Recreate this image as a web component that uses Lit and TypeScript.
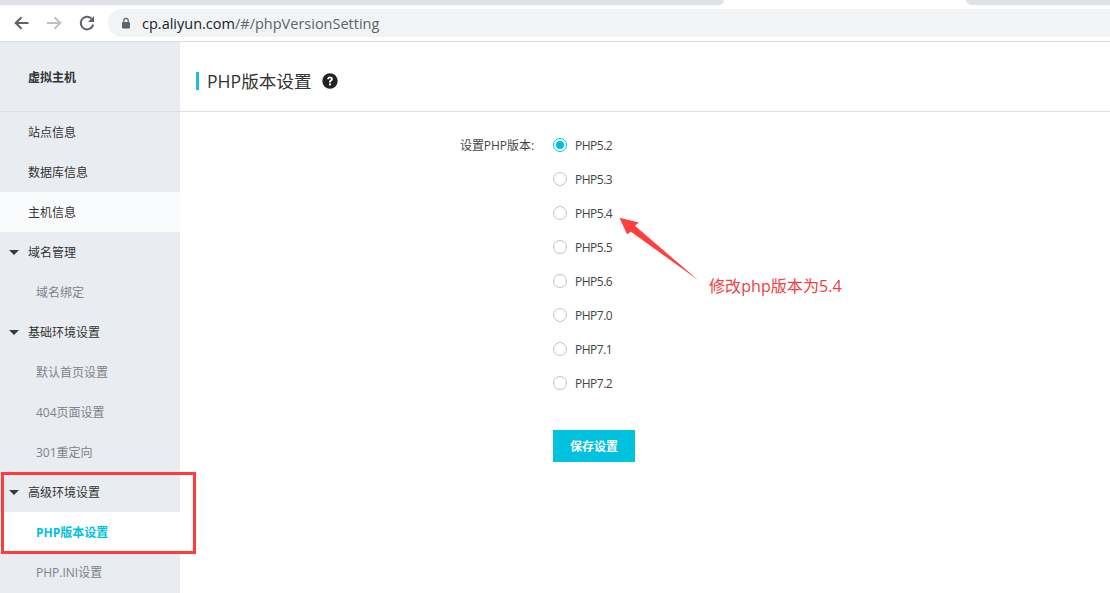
import { LitElement, html, css, svg } from "lit";
import { customElement } from "lit/decorators.js";

type Item = { label: string; kind: "top" | "sub" | "group"; state?: "hover" | "active" };

const ITEMS: Item[] = [
  { label: "站点信息", kind: "top" },
  { label: "数据库信息", kind: "top" },
  { label: "主机信息", kind: "top", state: "hover" },
  { label: "域名管理", kind: "group" },
  { label: "域名绑定", kind: "sub" },
  { label: "基础环境设置", kind: "group" },
  { label: "默认首页设置", kind: "sub" },
  { label: "404页面设置", kind: "sub" },
  { label: "301重定向", kind: "sub" },
  { label: "高级环境设置", kind: "group" },
  { label: "PHP版本设置", kind: "sub", state: "active" },
  { label: "PHP.INI设置", kind: "sub" },
];

const VERSIONS = ["PHP5.2", "PHP5.3", "PHP5.4", "PHP5.5", "PHP5.6", "PHP7.0", "PHP7.1", "PHP7.2"];

@customElement("app-root")
export class AppRoot extends LitElement {
  static styles = css`
    :host {
      display: block;
      position: relative;
      width: 1110px;
      height: 593px;
      overflow: hidden;
      background: #fff;
      font-family: "Open Sans", "Noto Sans CJK SC", sans-serif;
      font-size: 12px;
      color: #333;
    }
    .tabs { display: flex; height: 5px; background: #fff; }
    .tab-l { width: 724px; background: #dee1e6; border-bottom-right-radius: 5px; }
    .tab-gap { width: 242px; }
    .tab-r { flex: 1; background: #dee1e6; border-bottom-left-radius: 5px; }
    .toolbar {
      display: flex;
      align-items: center;
      height: 37px;
      box-sizing: border-box;
      padding: 4px 0;
      border-bottom: 1px solid #dadce0;
      background: #fff;
    }
    .nav { display: flex; width: 108px; flex: none; padding-left: 12px; gap: 15px; box-sizing: border-box; }
    .nav svg { display: block; width: 18px; height: 18px; flex: none; }
    .omni {
      flex: 1;
      height: 28px;
      display: flex;
      align-items: center;
      padding-left: 12px;
      gap: 10px;
      background: #f1f3f4;
      border-radius: 14px 0 0 14px;
      font-size: 14.5px;
      color: #5f6368;
    }
    .omni svg { width: 12px; height: 12px; flex: none; }
    .omni b { font-weight: 400; color: #202124; }
    .layout { display: flex; height: 551px; }
    .side { width: 180px; flex: none; background: #e9ecf1; }
    .side-head {
      height: 70px;
      box-sizing: border-box;
      padding: 0 0 0 28px;
      display: flex;
      align-items: center;
      font-size: 12px;
      font-weight: 700;
      color: #333;
      border-bottom: 1px solid #dcdfe3;
    }
    .row { height: 40px; display: flex; align-items: center; padding-left: 28px; position: relative; color: #333; }
    .row.sub { padding-left: 36px; color: #7f8389; }
    .row.hover { background: #fafbfd; }
    .row.active { background: #fff; color: #00c1de; font-weight: 700; }
    .caret {
      position: absolute;
      left: 9px;
      top: 18px;
      width: 0;
      height: 0;
      border-left: 5px solid transparent;
      border-right: 5px solid transparent;
      border-top: 5px solid #373d41;
    }
    .main { flex: 1; min-width: 0; }
    .head {
      height: 70px;
      box-sizing: border-box;
      border-bottom: 1px solid #dcdfe3;
      display: flex;
      align-items: center;
      padding-left: 16px;
      padding-top: 8px;
      font-size: 17.6px;
      color: #333;
    }
    .bar { width: 3px; height: 18px; background: #1fb9ee; margin-right: 8px; }
    .q { width: 16px; height: 16px; margin-left: 10px; display: block; }
    .form { display: flex; padding-top: 16px; }
    .lab { width: 354px; height: 34px; display: flex; align-items: center; justify-content: flex-end; flex: none; color: #444; letter-spacing: -0.05px; }
    .opts { margin-left: 19px; }
    .opt { height: 34px; display: flex; align-items: center; gap: 8px; color: #444; letter-spacing: -0.5px; }
    .radio {
      width: 14px;
      height: 14px;
      box-sizing: border-box;
      border: 1px solid #c3c3c3;
      border-radius: 50%;
      background: #fff;
    }
    .radio.on { border-color: #00c1de; display: flex; align-items: center; justify-content: center; }
    .radio.on::after { content: ""; width: 8px; height: 8px; border-radius: 50%; background: #00c1de; }
    .save {
      margin-top: 30px;
      width: 82px;
      height: 32px;
      display: flex;
      align-items: center;
      justify-content: center;
      background: #00c1de;
      color: #fff;
      font-weight: 700;
    }
    .mark { position: absolute; left: 1px; top: 472px; width: 195px; height: 82px; box-sizing: border-box; border: 3px solid #ff3b3b; }
    .arrow { position: absolute; left: 615px; top: 210px; width: 90px; height: 75px; }
    .note { position: absolute; left: 709px; top: 275px; font-size: 16.1px; line-height: 22px; color: #f04040; }
  `;

  private back = svg`<path d="M16.5 9H4M9.5 3.2 3.7 9l5.8 5.8" fill="none" stroke="#5f6368" stroke-width="2"/>`;
  private fwd = svg`<path d="M2 9h13M9.5 3.2 15.3 9l-5.8 5.8" fill="none" stroke="#bdc1c6" stroke-width="2"/>`;
  private reload = svg`<path d="M15.2 10.5A6.3 6.3 0 1 1 13.5 4.6" fill="none" stroke="#5f6368" stroke-width="2"/><path d="M16 2v6h-6z" fill="#5f6368"/>`;

  render() {
    return html`
      <div class="tabs"><div class="tab-l"></div><div class="tab-gap"></div><div class="tab-r"></div></div>
      <div class="toolbar">
        <div class="nav">
          <svg viewBox="0 0 18 18">${this.back}</svg>
          <svg viewBox="0 0 18 18">${this.fwd}</svg>
          <svg viewBox="0 0 18 18">${this.reload}</svg>
        </div>
        <div class="omni">
          <svg viewBox="0 0 12 12"><path d="M3.8 5V3.6a2.2 2.2 0 0 1 4.4 0V5" fill="none" stroke="#5f6368" stroke-width="1.2"/><rect x="2" y="5" width="8" height="6.5" rx="1" fill="#5f6368"/></svg>
          <span><b>cp.aliyun.com</b>/#/phpVersionSetting</span>
        </div>
      </div>
      <div class="layout">
        <aside class="side">
          <div class="side-head">虚拟主机</div>
          ${ITEMS.map(
            (i) => html`<div class="row ${i.kind} ${i.state ?? ""}">
              ${i.kind === "group" ? html`<span class="caret"></span>` : ""}${i.label}
            </div>`
          )}
        </aside>
        <main class="main">
          <div class="head">
            <span class="bar"></span>
            <span>PHP版本设置</span>
            <svg class="q" viewBox="0 0 16 16">
              <circle cx="8" cy="8" r="7.7" fill="#222"/>
              <path d="M5.2 6.2c0-1.7 1.3-2.7 2.9-2.7s2.8 1 2.8 2.4c0 2-2.1 2-2.1 3.5H7c0-2.4 1.9-2.3 1.9-3.4 0-.5-.4-.8-.9-.8-.6 0-1 .4-1 1z" fill="#fff"/>
              <rect x="7" y="10.4" width="1.9" height="2" fill="#fff"/>
            </svg>
          </div>
          <div class="form">
            <div class="lab">设置PHP版本:</div>
            <div class="opts">
              ${VERSIONS.map(
                (v, n) => html`<div class="opt"><span class="radio ${n === 0 ? "on" : ""}"></span><span>${v}</span></div>`
              )}
              <div class="save">保存设置</div>
            </div>
          </div>
        </main>
      </div>
      <div class="mark"></div>
      <svg class="arrow" viewBox="0 0 90 75">
        <path d="M4.5 7.8 23.8 12.5 20 15.8 83 70 16 21.8 12 24.2z" fill="#ff4040"/>
      </svg>
      <div class="note">修改php版本为5.4</div>
    `;
  }
}
